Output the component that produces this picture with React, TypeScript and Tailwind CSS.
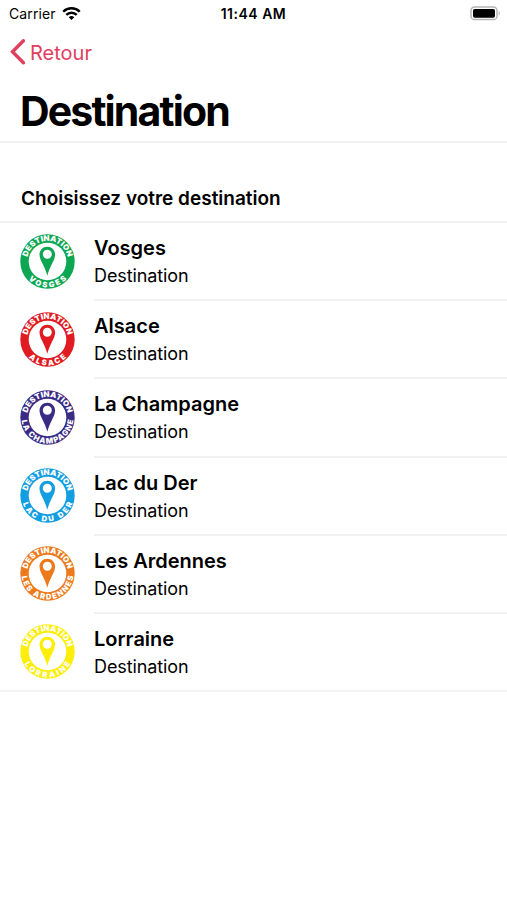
import { useId } from 'react'


type Place = {
    name: string
    color: string
    // half of the angle the name covers on the bottom of the ring
    spread: number
}


const places: Place[] = [
    { name: 'Vosges', color: '#0da652', spread: 47 },
    { name: 'Alsace', color: '#e01b22', spread: 46 },
    { name: 'La Champagne', color: '#3a2c85', spread: 83 },
    { name: 'Lac du Der', color: '#129ee0', spread: 72 },
    { name: 'Les Ardennes', color: '#ec7a1c', spread: 83 },
    { name: 'Lorraine', color: '#fdee0a', spread: 62 },
]


const arc = (radius: number, spread: number, bottom: boolean) => {
    const a = (spread * Math.PI) / 180
    const dx = radius * Math.sin(a)
    const dy = radius * Math.cos(a) * (bottom ? 1 : -1)
    return `M${27.5 - dx} ${27.5 + dy}A${radius} ${radius} 0 0 ${bottom ? 0 : 1} ${27.5 + dx} ${27.5 + dy}`
}


const arcLength = (radius: number, spread: number) => (radius * spread * 2 * Math.PI) / 180


const Badge = ({ name, color, spread }: Place) => {
    const id = useId()
    return (
        <svg viewBox="0 0 55 55" className="w-[55px] h-[55px] shrink-0">
            <defs>
                <path id={`${id}t`} d={arc(20.6, 79, false)} />
                <path id={`${id}b`} d={arc(26, spread + 3, true)} />
            </defs>
            <circle cx="27.5" cy="27.5" r="27.2" fill={color} />
            <circle cx="27.5" cy="27.5" r="18.8" fill="#fff" />
            <g className="font-['Inter',sans-serif] font-black text-[7.7px]" fill="#fff">
                <text textLength={arcLength(20.6, 77)} lengthAdjust="spacingAndGlyphs">
                    <textPath href={`#${id}t`} startOffset="0.7">DESTINATION</textPath>
                </text>
                <text textLength={arcLength(26, spread)} lengthAdjust="spacing">
                    <textPath href={`#${id}b`} startOffset="1.3">{name.toUpperCase()}</textPath>
                </text>
            </g>
            <path
                fill={color}
                fillRule="evenodd"
                d="M27.3 12.8c-4.4 0-7.8 3.4-7.8 7.8 0 3.2 1.5 6 3.2 9.4 1.8 3.6 3.4 7.2 4.6 11.8 1.2-4.6 2.8-8.2 4.6-11.8 1.7-3.4 3.2-6.2 3.2-9.4 0-4.4-3.4-7.8-7.8-7.8zm0 3a4.5 4.5 0 1 1 0 9 4.5 4.5 0 0 1 0-9z"
            />
        </svg>
    )
}


const StatusBar = () => {
    return (
        <div className="grid grid-cols-3 items-center h-[27px] px-[6px] text-[14px]">
            <div className="flex items-center gap-[6px] pl-[3px]">
                <span className="tracking-[0.1px]">Carrier</span>
                <svg viewBox="0 0 20 14" className="w-[19px] h-[14px]" fill="none" stroke="#000" strokeWidth="2.5">
                    <path d="M1.3 4.6a12.3 12.3 0 0 1 17.4 0" />
                    <path d="M4.5 8a7.8 7.8 0 0 1 11 0" />
                    <path d="M10 13.4 7.1 10.5a4.1 4.1 0 0 1 5.8 0z" fill="#000" stroke="none" />
                </svg>
            </div>
            <span className="text-center font-semibold whitespace-nowrap tracking-[0.5px]">11:44 AM</span>
            <svg viewBox="0 0 31 15" className="w-[31px] h-[15px] justify-self-end">
                <rect x="1" y="1" width="26" height="12.6" rx="3.6" fill="#fff" stroke="#b5b5b5" strokeWidth="1.5" />
                <rect x="3" y="3" width="22" height="8.8" rx="1.8" fill="#000" />
                <path d="M28.6 5.2c1.7.6 1.7 3.8 0 4.4z" fill="#b5b5b5" />
            </svg>
        </div>
    )
}


const App = () => {
    return (
        <div className="w-[507px] h-[900px] bg-white text-black overflow-hidden font-['Inter',sans-serif]">
            <StatusBar />
            <header className="h-[116px] border-b-2 border-[#f1f1f1]">
                <button className="flex items-center gap-[5px] h-[50px] pl-[10px] text-[#e0405f] text-[20px]">
                    <svg viewBox="0 0 15 26" className="w-[15px] h-[26px]" fill="none" stroke="currentColor" strokeWidth="3.4">
                        <path d="M13.4 1.8 2.5 12.8 13.4 23.8" strokeLinecap="round" />
                    </svg>
                    <span className="pt-[2px]">Retour</span>
                </button>
                <h1 className="pl-[20px] pt-[8px] text-[41px] leading-[52px] font-bold tracking-[-1.85px]">Destination</h1>
            </header>
            <h2 className="h-[80px] pt-[43px] pl-[21px] text-[19px] leading-[26px] font-semibold border-b-2 border-[#f1f1f1]">
                Choisissez votre destination
            </h2>
            <ul className="h-[469px] border-b-2 border-[#f3f3f3]">
                {places.map((p, i) => (
                    <li key={p.name} className="flex h-[78.2px] pl-[20px] gap-[19px]">
                        <div className="pt-[10.5px]">
                            <Badge {...p} />
                        </div>
                        <div className={i < places.length - 1 ? 'grow pt-[11px] border-b-2 border-[#f1f1f1]' : 'grow pt-[11px]'}>
                            <p className="text-[20px] leading-[28px] font-semibold">{p.name}</p>
                            <p className="text-[18px] leading-[27px] tracking-[-0.1px]">Destination</p>
                        </div>
                    </li>
                ))}
            </ul>
        </div>
    )
}


export default App
